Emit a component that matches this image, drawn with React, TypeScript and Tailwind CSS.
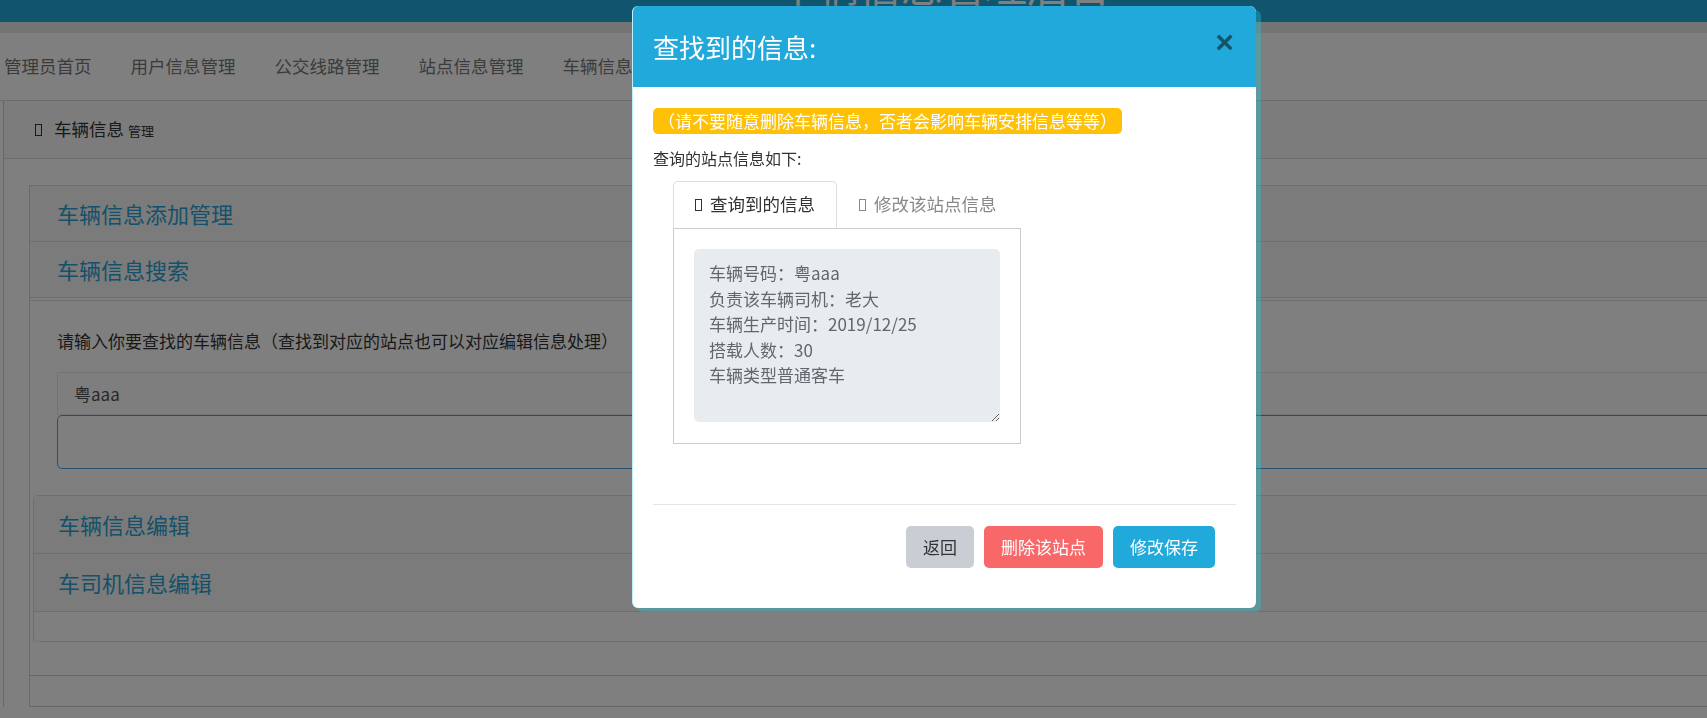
import React from "react";

function Tofu({ className = "" }: { className?: string }) {
  return <span className={"inline-block h-[12px] w-[7px] border border-current " + className} />;
}

const navItems = ["管理员首页", "用户信息管理", "公交线路管理", "站点信息管理", "车辆信息管理"];

const info = "车辆号码：粤aaa\n负责该车辆司机：老大\n车辆生产时间：2019/12/25\n搭载人数：30\n车辆类型普通客车";

export default function App() {
  return (
    <div className="relative h-[718px] w-full overflow-hidden bg-white font-['Noto_Sans_CJK_SC','Noto_Sans',sans-serif]">
      {/* top banner, scrolled mostly out of view */}
      <header className="h-[22px] overflow-hidden bg-[#22a9db]">
        <div className="-mt-[37px] whitespace-nowrap pl-[775px] text-[42px] leading-[42px] text-white">
          车辆信息管理后台
        </div>
      </header>
      <div className="h-[11px] bg-[#e8e8e8]" />

      <nav className="flex h-[68px] items-center gap-[39px] whitespace-nowrap border-b border-[#d9d9d9] bg-white pl-[4px] text-[17.5px] text-[#777]">
        {navItems.map((n) => (
          <span key={n}>{n}</span>
        ))}
      </nav>

      <div className="ml-[3px] w-[1760px] border-l border-[#cfcfcf]">
        <div className="flex h-[58px] items-center gap-[12px] border-b border-[#ddd] bg-[#f8f8f8] pl-[31px] text-[#333]">
          <Tofu />
          <span className="text-[17.5px]">
            车辆信息 <small className="text-[13px]">管理</small>
          </span>
        </div>

        <div className="pl-[25px] pt-[26px]">
          <div className="border-l border-[#d5d5d5]">
            <div className="flex h-[57px] items-center border-y border-[#ddd] bg-[#f7f7f7] pl-[27px] text-[22px] text-[#2aa3d4]">
              车辆信息添加管理
            </div>
            <div className="flex h-[56px] items-center border-b border-[#ddd] bg-[#f7f7f7] pl-[27px] text-[22px] text-[#2aa3d4]">
              车辆信息搜索
            </div>
            <div className="mt-[2px] border-t border-[#ddd] pb-[16px] pl-[27px] pt-[28px]">
              <p className="text-[17px] leading-[24px] text-[#333]">
                请输入你要查找的车辆信息（查找到对应的站点也可以对应编辑信息处理）
              </p>
              <div className="mt-[19px] flex h-[43px] items-center border border-[#e6e6e6] bg-[#fcfcfc] pl-[16px] text-[17px] text-[#555]">
                粤aaa
              </div>
              <div className="h-[54px] rounded-[5px] border border-[#4a9fd8] bg-white" />
            </div>

            <div className="ml-[3px] mt-[10px] rounded-tl-[5px] border-l border-t border-[#ddd]">
              <div className="flex h-[58px] items-center border-b border-[#ddd] bg-[#f7f7f7] pl-[24px] text-[22px] text-[#2aa3d4]">
                车辆信息编辑
              </div>
              <div className="flex h-[58px] items-center border-b border-[#ddd] bg-[#f7f7f7] pl-[24px] text-[22px] text-[#2aa3d4]">
                车司机信息编辑
              </div>
              <div className="h-[30px] rounded-bl-[5px] border-b border-[#ddd]" />
            </div>
            <div className="h-[34px] border-b border-[#ccc]" />
            <div className="h-[31px] border-b border-[#ccc]" />
          </div>
        </div>
      </div>

      {/* modal backdrop */}
      <div className="fixed inset-0 bg-black/50" />

      <div className="fixed left-[632px] top-[6px] w-[624px] overflow-hidden rounded-[6px] border-l border-[#bff0f8] bg-white shadow-[5px_4px_0_0_rgba(34,200,220,0.35)]">
        <div className="flex h-[81px] items-center justify-between bg-[#22a9db] pl-[20px] pr-[22px]">
          <h4 className="text-[26px] leading-[32px] text-white">查找到的信息:</h4>
          <button className="-mt-[9px] font-['Liberation_Sans',sans-serif] text-[32px] font-bold leading-none text-black/50">×</button>
        </div>

        <div className="px-[20px] pb-[60px] pt-[21px]">
          <span className="inline-block h-[26px] rounded-[5px] bg-[#ffc107] px-[5px] text-[17px] leading-[26px] text-white">
            （请不要随意删除车辆信息，否者会影响车辆安排信息等等）
          </span>
          <p className="mt-[12px] text-[16px] leading-[24px] text-[#333]">查询的站点信息如下:</p>

          <div className="ml-[20px] mt-[11px] w-[348px]">
            <div className="flex border-b border-[#ccc]">
              <div className="-mb-px flex h-[47px] items-center gap-[8px] rounded-t-[5px] border border-[#ddd] border-b-white bg-white px-[21px] text-[17.5px] text-[#333]">
                <Tofu />
                <span>查询到的信息</span>
              </div>
              <div className="flex h-[47px] items-center gap-[8px] px-[22px] text-[17.5px] text-[#888]">
                <Tofu />
                <span>修改该站点信息</span>
              </div>
            </div>
            <div className="border-x border-b border-[#ccc] px-[20px] pb-[21px] pt-[20px]">
              <textarea
                readOnly
                value={info}
                className="block h-[173px] w-full resize-y rounded-[5px] bg-[#e9ecef] px-[15px] py-[11px] text-[17px] leading-[25.5px] text-[#61676d] outline-none"
              />
            </div>
          </div>
        </div>

        <div className="mx-[20px] flex justify-end gap-[10px] border-t border-[#e5e5e5] pb-[40px] pr-[21px] pt-[21px] text-[17px]">
          <button className="h-[42px] rounded-[5px] bg-[#c9ced5] px-[17px] text-[#333]">返回</button>
          <button className="h-[42px] rounded-[5px] bg-[#f96868] px-[17px] text-white">删除该站点</button>
          <button className="h-[42px] rounded-[5px] bg-[#22a9db] px-[17px] text-white">修改保存</button>
        </div>
      </div>
    </div>
  );
}
